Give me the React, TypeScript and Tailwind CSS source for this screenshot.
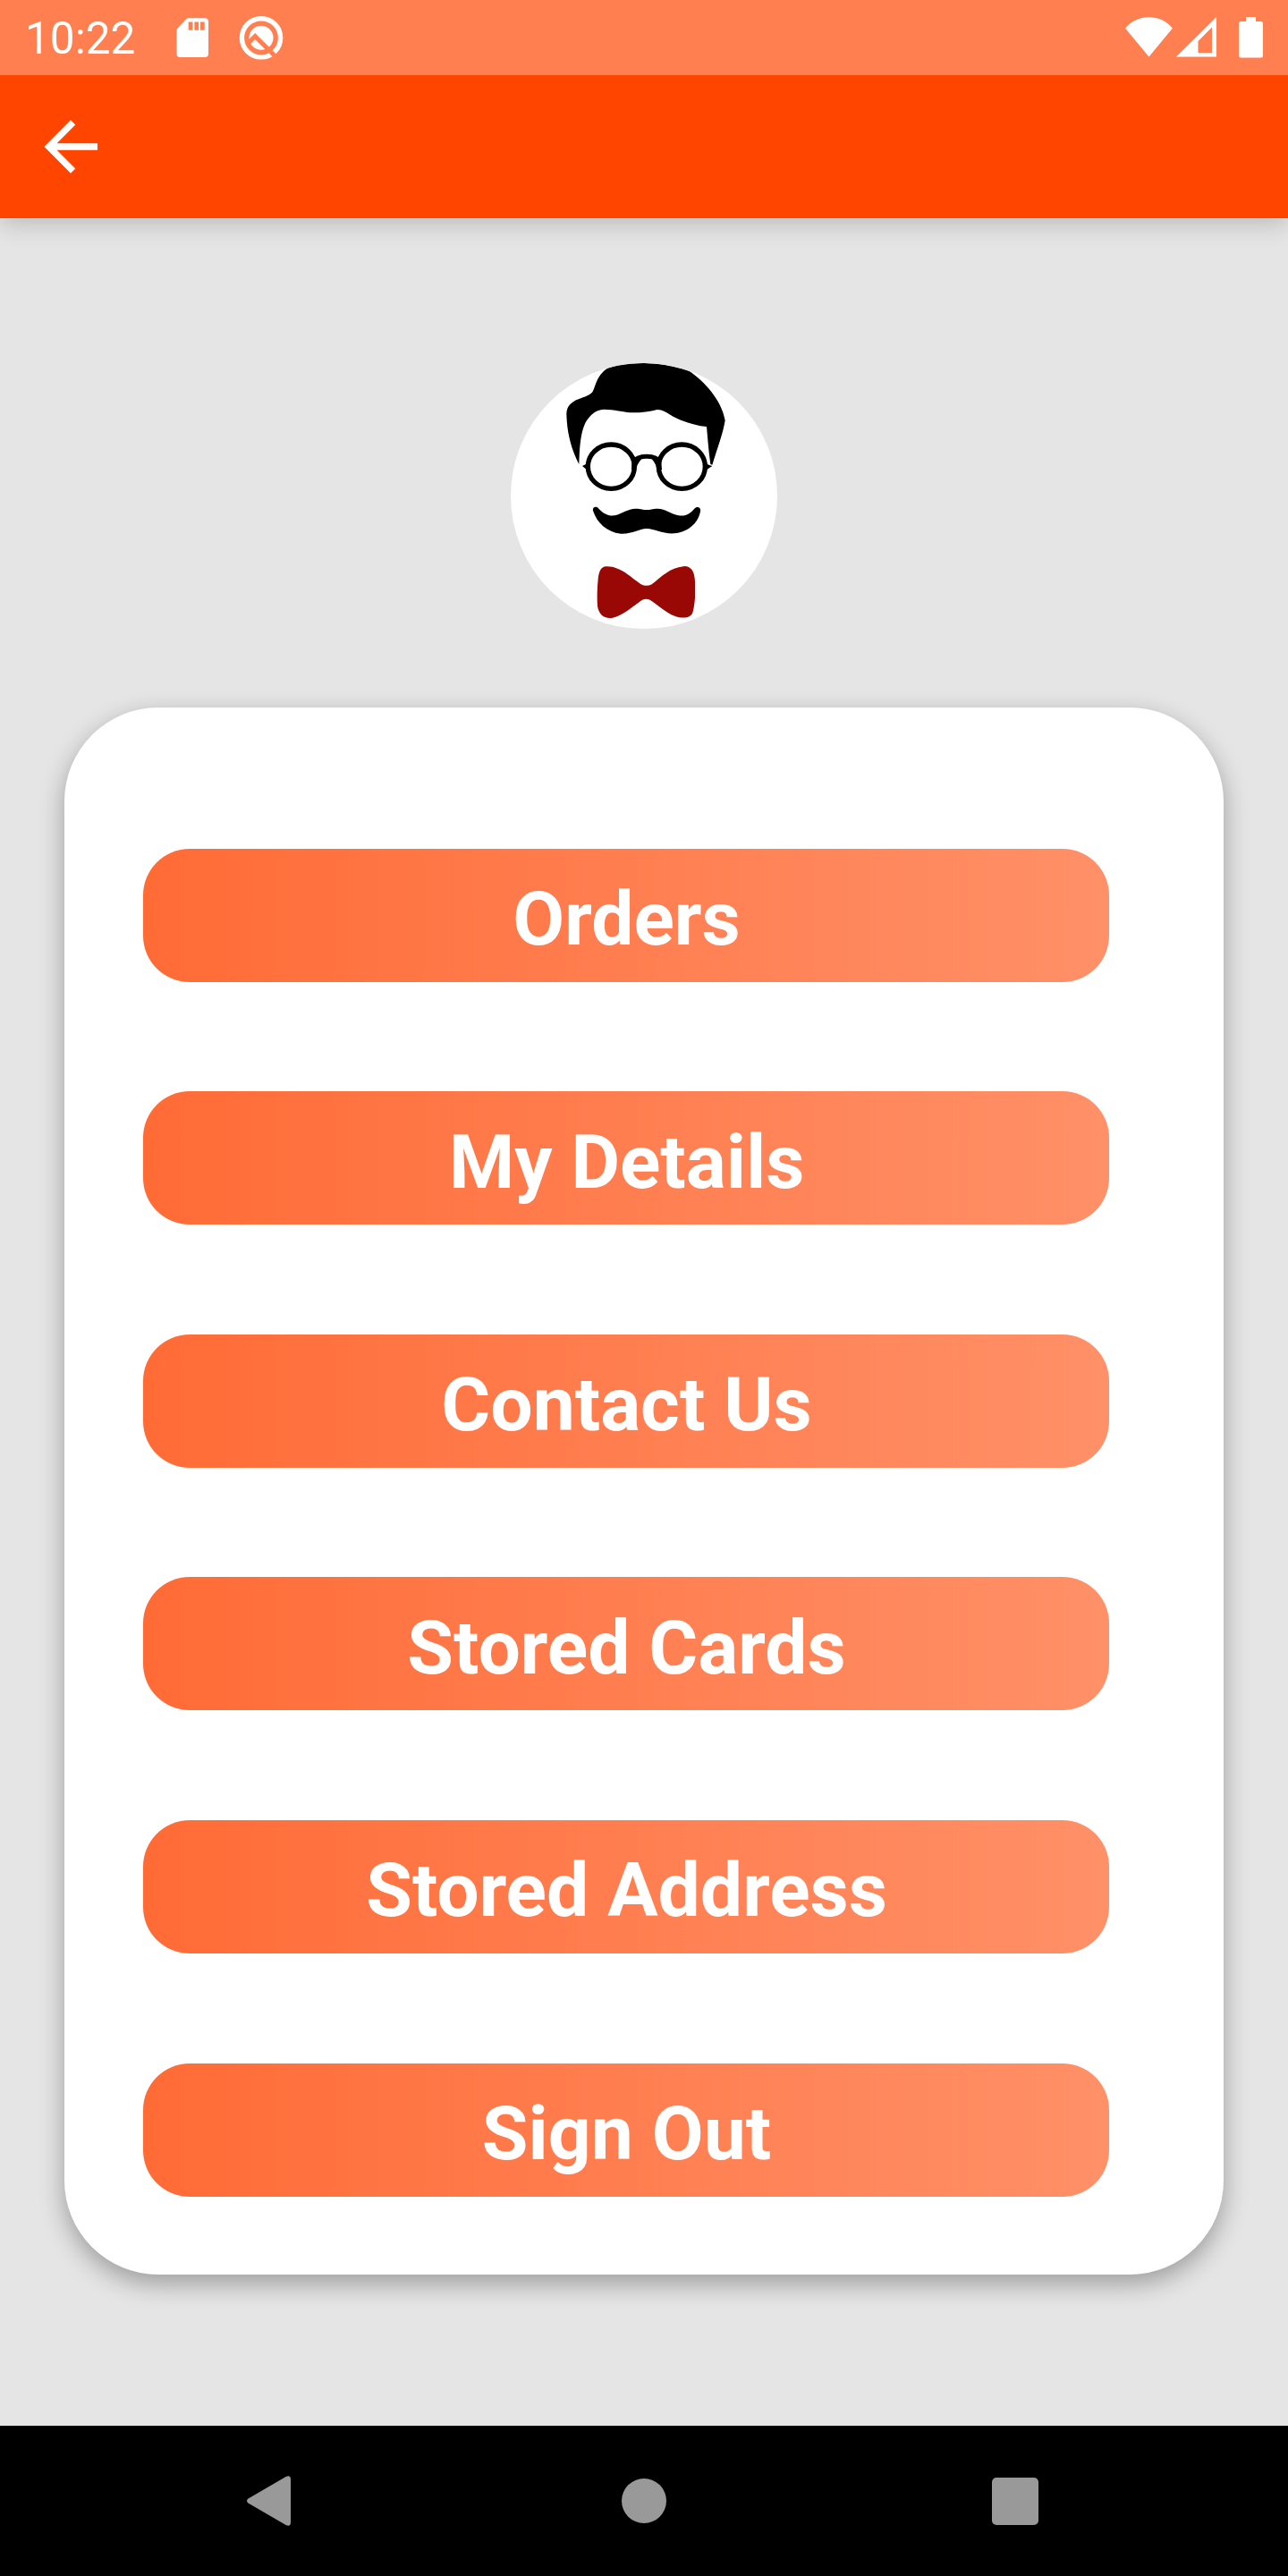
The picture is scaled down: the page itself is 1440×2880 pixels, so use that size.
const menuItems = [
  "Orders",
  "My Details",
  "Contact Us",
  "Stored Cards",
  "Stored Address",
  "Sign Out",
];

function StatusBar() {
  return (
    <div className="relative z-10 flex h-[84px] items-start bg-[#ff7f50] text-white">
      <span className="ml-7 mt-[14px] w-[122px] text-[49.5px] leading-[58px]">10:22</span>

      {/* SD card */}
      <svg className="ml-[47px] mt-5 h-[45px] w-9" viewBox="0 0 36 45" fill="currentColor">
        <path
          fillRule="evenodd"
          d="M13.5 .3H32a4 4 0 0 1 4 4V40a4 4 0 0 1-4 4H4.500a4 4 0 0 1-4-4V14.500q0-1.700 1.200-2.900L11 1.400Q12 .3 13.500 .3ZM13.700 4.500v9.200h4.700V4.500ZM20.400 4.500v9.200h4.700V4.500ZM27 4.500v9.200h4.700V4.500Z"
        />
      </svg>

      {/* Q badge */}
      <svg className="ml-[34px] mt-[17px] h-[51px] w-[51px]" viewBox="0 0 51 51">
        <circle cx="25" cy="25.300" r="21.600" fill="none" stroke="#fff" strokeWidth="5.400" />
        <circle cx="25" cy="25.300" r="13.500" fill="#fff" />
        <path d="M10.200 31.500 18.200 23.500 43 48.300" fill="none" stroke="#ff7f50" strokeWidth="5" />
      </svg>

      {/* wifi, signal, battery */}
      <svg className="ml-auto mt-[19px] h-[45px] w-[53px]" viewBox="0 0 53 45" fill="currentColor">
        <path d="M0 12.500C7 4.500 16 .3 26.500 .3S46 4.500 53 12.500L26.500 44.500Z" />
      </svg>
      <svg className="ml-1 mt-[19px] h-[45px] w-[45px]" viewBox="0 0 45 45" fill="currentColor">
        <path fillRule="evenodd" d="M45 0V44.500H0ZM40 11.500 24.500 27V40H40Z" />
      </svg>
      <svg className="ml-[25px] mr-7 mt-[19px] h-[46px] w-[27px]" viewBox="0 0 27 46" fill="currentColor">
        <path d="M8 0H19V5H24.500A2.500 2.500 0 0 1 27 7.500V43A2.500 2.500 0 0 1 24.500 45.500H2.500A2.500 2.500 0 0 1 0 43V7.500A2.500 2.500 0 0 1 2.500 5H8Z" />
      </svg>
    </div>
  );
}

function Header() {
  return (
    <header className="flex h-40 items-center bg-[#ff4500] pl-[49px] shadow-[0_8px_24px_rgba(0,0,0,0.17)]">
      <button type="button" aria-label="Back" className="text-white">
        <svg className="h-[60px] w-[60px]" viewBox="0 0 60 60" fill="currentColor">
          <path d="M60 26.300H14.600L35.300 5.400 30 .3 .5 30 30 59.700 35.300 54.600 14.600 33.700H60Z" />
        </svg>
      </button>
    </header>
  );
}

function Avatar() {
  return (
    <div className="mx-auto h-[297px] w-[298px] overflow-hidden rounded-full bg-white">
      <svg className="h-full w-full" viewBox="33 33 894 891">
        {/* hair */}
        <path d="M262 372C240 330 222 275 220 205C220 180 232 168 252 157C275 147 292 144 306 131C318 115 318 75 358 50C400 36 440 33 480 33C530 34 580 42 632 60C680 92 740 155 752 225C745 270 722 330 709 374L703 372C697 330 694 290 690 246C650 243 600 226 568 206C552 196 540 188 524 189C500 196 470 199 445 199C410 198 380 188 345 188C318 190 300 205 284 232C268 265 264 310 262 372Z" />
        {/* glasses */}
        <g fill="none" stroke="#000" strokeWidth="16">
          <ellipse cx="370" cy="380" rx="78" ry="74" />
          <ellipse cx="607" cy="380" rx="78" ry="74" />
          <path d="M448 360C466 341 512 341 530 360" strokeWidth="15" />
        </g>
        <path d="M441 342 460 354 472 347 470 357Q456 370 452 398L438 390ZM536 342 518 354 506 347 508 357Q521 370 525 398L540 390Z" />
        <path d="M293 364Q286 375 273 378Q286 388 297 400ZM684 364Q692 375 709 378Q692 388 680 400Z" />
        {/* moustache */}
        <path d="M309 528C306 514 322 512 328 521C342 536 360 547 382 544C408 537 425 522 452 521C470 521 478 525 489 525C501 525 508 521 526 521C552 522 570 538 596 544C620 548 637 536 649 521C656 512 672 514 669 530C664 565 630 600 582 604C540 606 517 589 489 588C462 589 440 607 402 605C355 600 322 568 309 528Z" />
        {/* bow tie */}
        <path
          fill="#990804"
          d="M345 716C395 708 436 752 470 775Q488 784 506 775C542 746 570 716 618 714C642 716 650 738 651 765V820C650 835 647 860 643 870C634 891 608 889 585 882C550 868 524 842 500 827Q487 821 474 827C446 845 415 877 375 887C345 891 329 876 324 848C322 820 323 790 326 757C328 738 332 722 345 716Z"
        />
      </svg>
    </div>
  );
}

function NavBar() {
  return (
    <nav className="flex h-[168px] items-center justify-between bg-black pl-[276px] pr-[279px] text-[#999]">
      <svg className="h-14 w-[55px]" viewBox="0 0 55 56" fill="currentColor">
        <path d="M1.500 25.500 44 .8Q49 -1 49 4V52Q49 57 44 55.200L1.500 30.500Q-1.500 28 1.500 25.500Z" />
      </svg>
      <div className="h-[50px] w-[50px] rounded-full bg-[#999]" />
      <div className="h-[53px] w-[52px] rounded-[5px] bg-[#999]" />
    </nav>
  );
}

export default function App() {
  return (
    <div className="flex h-[2880px] w-[1440px] flex-col bg-[#e5e5e5] font-['Roboto',sans-serif]">
      <StatusBar />
      <Header />

      <main className="flex-1 px-[72px] pt-[162px]">
        <Avatar />

        <section className="mt-[88px] flex h-[1752px] flex-col gap-[122.55px] rounded-[105px] bg-white pl-[88px] pt-[157.8px] shadow-[0_10px_28px_rgba(0,0,0,0.32)]">
          {menuItems.map((item) => (
            <button
              key={item}
              type="button"
              className="h-[149px] w-[1080px] shrink-0 rounded-[52px] bg-linear-to-r from-[#ff6b35] to-[#ff9068] pl-px pt-[10px] text-[84px] font-bold leading-[98px] text-white"
            >
              {item}
            </button>
          ))}
        </section>
      </main>

      <NavBar />
    </div>
  );
}
